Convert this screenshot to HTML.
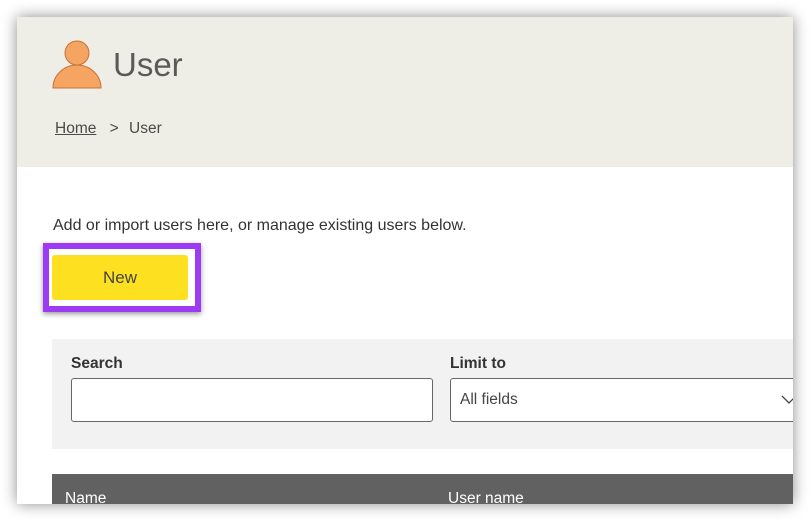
<!DOCTYPE html>
<html><head><style>
html,body{margin:0;padding:0;width:811px;height:522px;background:#fff;overflow:hidden;font-family:"Liberation Sans",sans-serif;}
.win{position:absolute;left:17px;top:17px;width:776px;height:487px;background:#fff;box-shadow:0 0 14px rgba(0,0,0,0.45);overflow:hidden;}
.hdr{position:absolute;left:0;top:0;width:776px;height:150px;background:#efeee6;}
.title{position:absolute;left:96px;top:29px;font-size:33px;color:#5a5a5a;}
.crumb{position:absolute;left:38px;top:103px;font-size:15.5px;color:#4a4a4a;}
.crumb u{color:#4a4a4a;}
.intro{position:absolute;left:36px;top:200px;font-size:16px;color:#333;}
.focus{position:absolute;left:26px;top:226px;width:146px;height:57px;border:6px solid #9d3af3;box-shadow:0 2px 5px rgba(0,0,0,0.4);}
.btn{position:absolute;left:35px;top:238px;width:136px;height:45px;background:#fde020;border-radius:3px;text-align:center;line-height:45px;font-size:17px;color:#444;}
.panel{position:absolute;left:35px;top:322px;width:760px;height:110px;background:#f2f2f2;}
.lbl{position:absolute;top:16px;font-size:15.5px;font-weight:bold;color:#333;}
.inp{position:absolute;top:39px;height:44px;border:1px solid #666;border-radius:3px;background:#fff;box-sizing:border-box;}
.th{position:absolute;left:35px;top:457px;width:760px;height:40px;background:#616161;color:#fff;font-size:15.5px;}
</style></head><body>
<div class="win">
<div class="hdr">
<svg style="position:absolute;left:35px;top:22px" width="50" height="50" viewBox="0 0 50 50"><circle cx="25" cy="14" r="12" fill="#f6a461" stroke="#c8703a" stroke-width="1"/><path d="M1 49 A24 23 0 0 1 49 49 Z" fill="#f6a461" stroke="#c8703a" stroke-width="1"/></svg>
<div class="title">User</div>
<div class="crumb"><u>Home</u> <span style="display:inline-block;margin:0 6px 0 9px;">&gt;</span> User</div>
</div>
<div class="intro">Add or import users here, or manage existing users below.</div>
<div class="focus"></div>
<div class="btn">New</div>
<div class="panel">
<div class="lbl" style="left:19px">Search</div>
<div class="lbl" style="left:398px">Limit to</div>
<div class="inp" style="left:19px;width:362px"></div>
<div class="inp" style="left:398px;width:360px;font-size:15.5px;color:#444;line-height:42px;padding-left:9px">All fields
<svg style="position:absolute;left:330px;top:16px" width="16" height="10"><path d="M1 1 L8 8 L15 1" fill="none" stroke="#444" stroke-width="1.3"/></svg></div>
</div>
<div class="th"><span style="position:absolute;left:13px;top:16px">Name</span><span style="position:absolute;left:396px;top:16px">User name</span></div>
</div>
</body></html>
